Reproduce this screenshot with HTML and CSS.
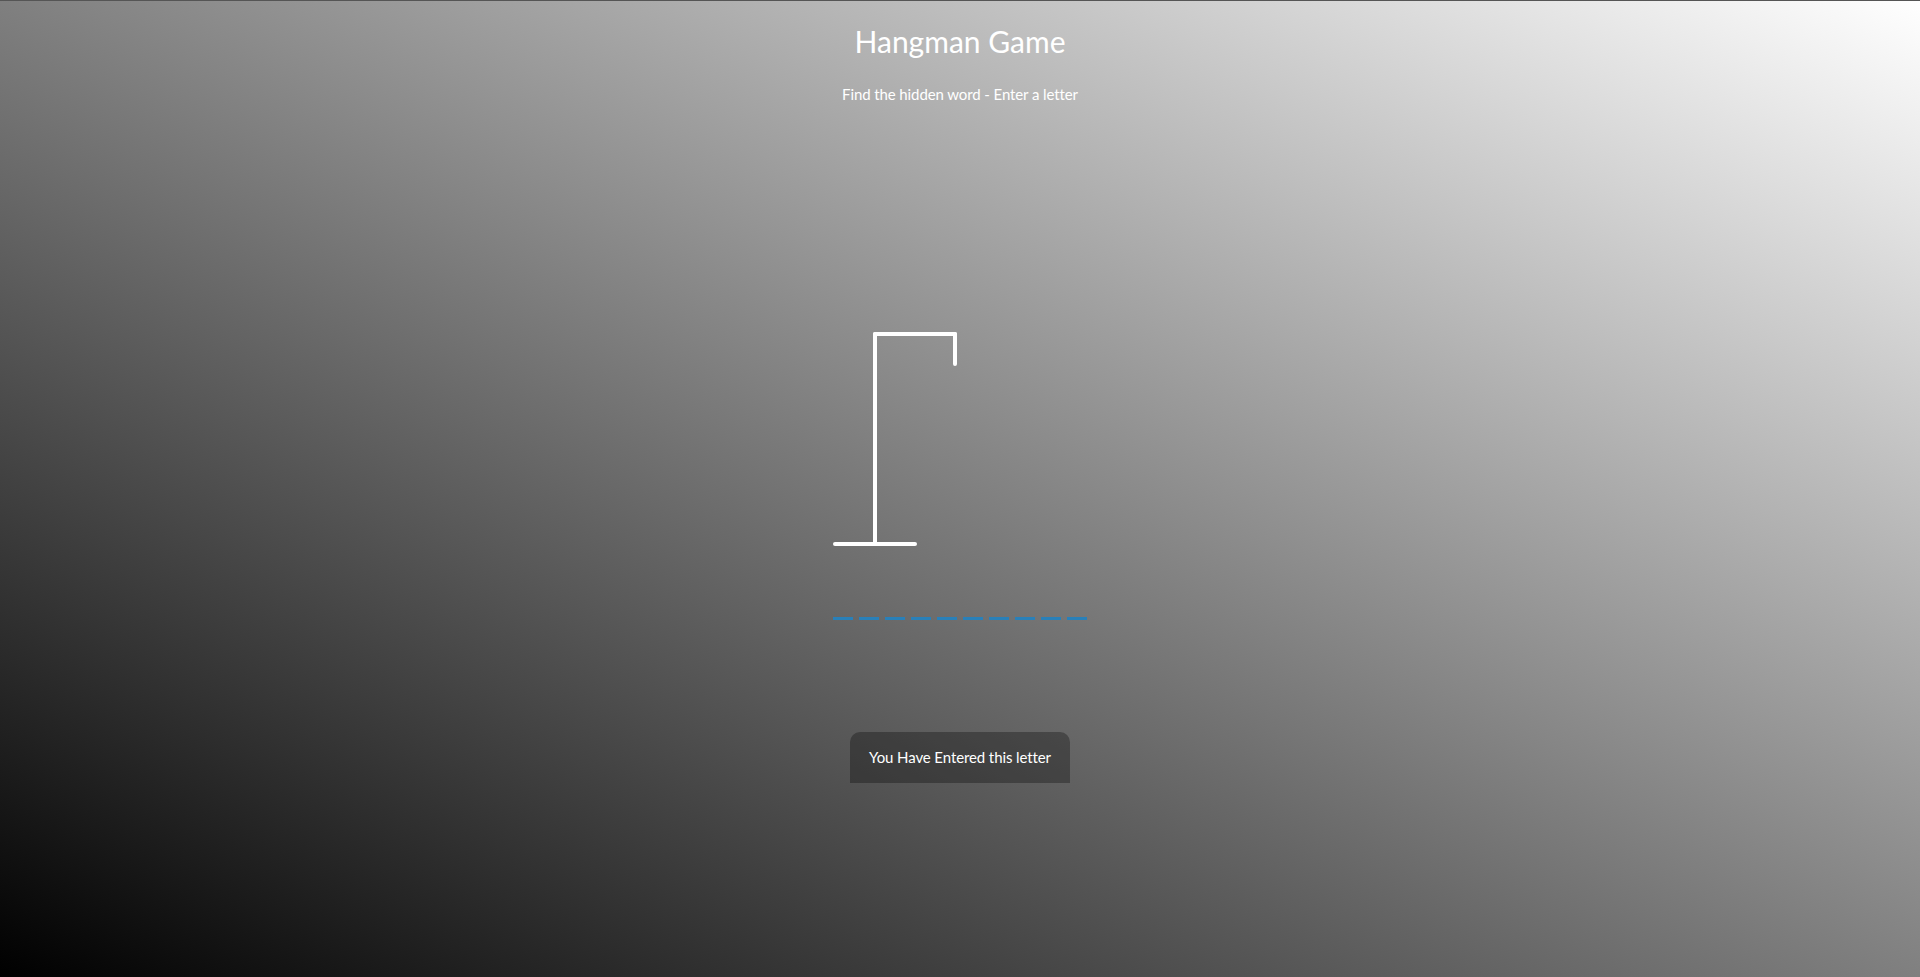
FILE: index.html
```html
<!DOCTYPE html>
<html lang="en">
<head>
<meta charset="UTF-8">
<title>Hangman Game</title>
<link rel="stylesheet" href="styles.css">
</head>
<body>
  <h1 class="title">Hangman Game</h1>
  <p class="subtitle">Find the hidden word - Enter a letter</p>
  <main class="game">
    <svg class="figure" width="200" height="250" viewBox="0 0 200 250">
      <line x1="60" y1="20" x2="140" y2="20"></line>
      <line x1="140" y1="20" x2="140" y2="50"></line>
      <line x1="60" y1="20" x2="60" y2="230"></line>
      <line x1="20" y1="230" x2="100" y2="230"></line>
    </svg>
    <div class="word">
      <span class="letter"></span><span class="letter"></span><span class="letter"></span><span class="letter"></span><span class="letter"></span><span class="letter"></span><span class="letter"></span><span class="letter"></span><span class="letter"></span><span class="letter"></span>
    </div>
  </main>
  <div class="notification">You Have Entered this letter</div>
</body>
</html>
```

FILE: styles.css
```css
html, body {
  margin: 0;
  padding: 0;
}

body {
  height: 100vh;
  box-sizing: border-box;
  border-top: 1px solid #555;
  background: linear-gradient(to top right, #000000, #ffffff);
  color: #ffffff;
  font-family: Lato, "Noto Sans", sans-serif;
  display: flex;
  flex-direction: column;
  align-items: center;
  overflow: hidden;
}

.title {
  margin: 20px 0 0;
  font-size: 30px;
  line-height: 40px;
  font-weight: 400;
}

.subtitle {
  margin: 23px 0 0;
  font-size: 15px;
  line-height: 20px;
  letter-spacing: -0.1px;
}

.game {
  margin-top: 210px;
  display: flex;
  flex-direction: column;
  align-items: center;
}

.figure {
  display: block;
  margin-left: -90px;
  fill: transparent;
  stroke: #ffffff;
  stroke-width: 4px;
  stroke-linecap: round;
}

.word {
  display: flex;
  margin-top: 3px;
}

.letter {
  width: 20px;
  height: 50px;
  margin: 0 3px;
  border-bottom: 3px solid #2980b9;
}

.notification {
  margin-top: 112px;
  background-color: rgba(0, 0, 0, 0.3);
  border-radius: 10px 10px 0 0;
  padding: 15px 16px;
  font-size: 15px;
  line-height: 20px;
  letter-spacing: -0.1px;
  width: 188px;
  height: 21px;
  text-align: center;
}
```
